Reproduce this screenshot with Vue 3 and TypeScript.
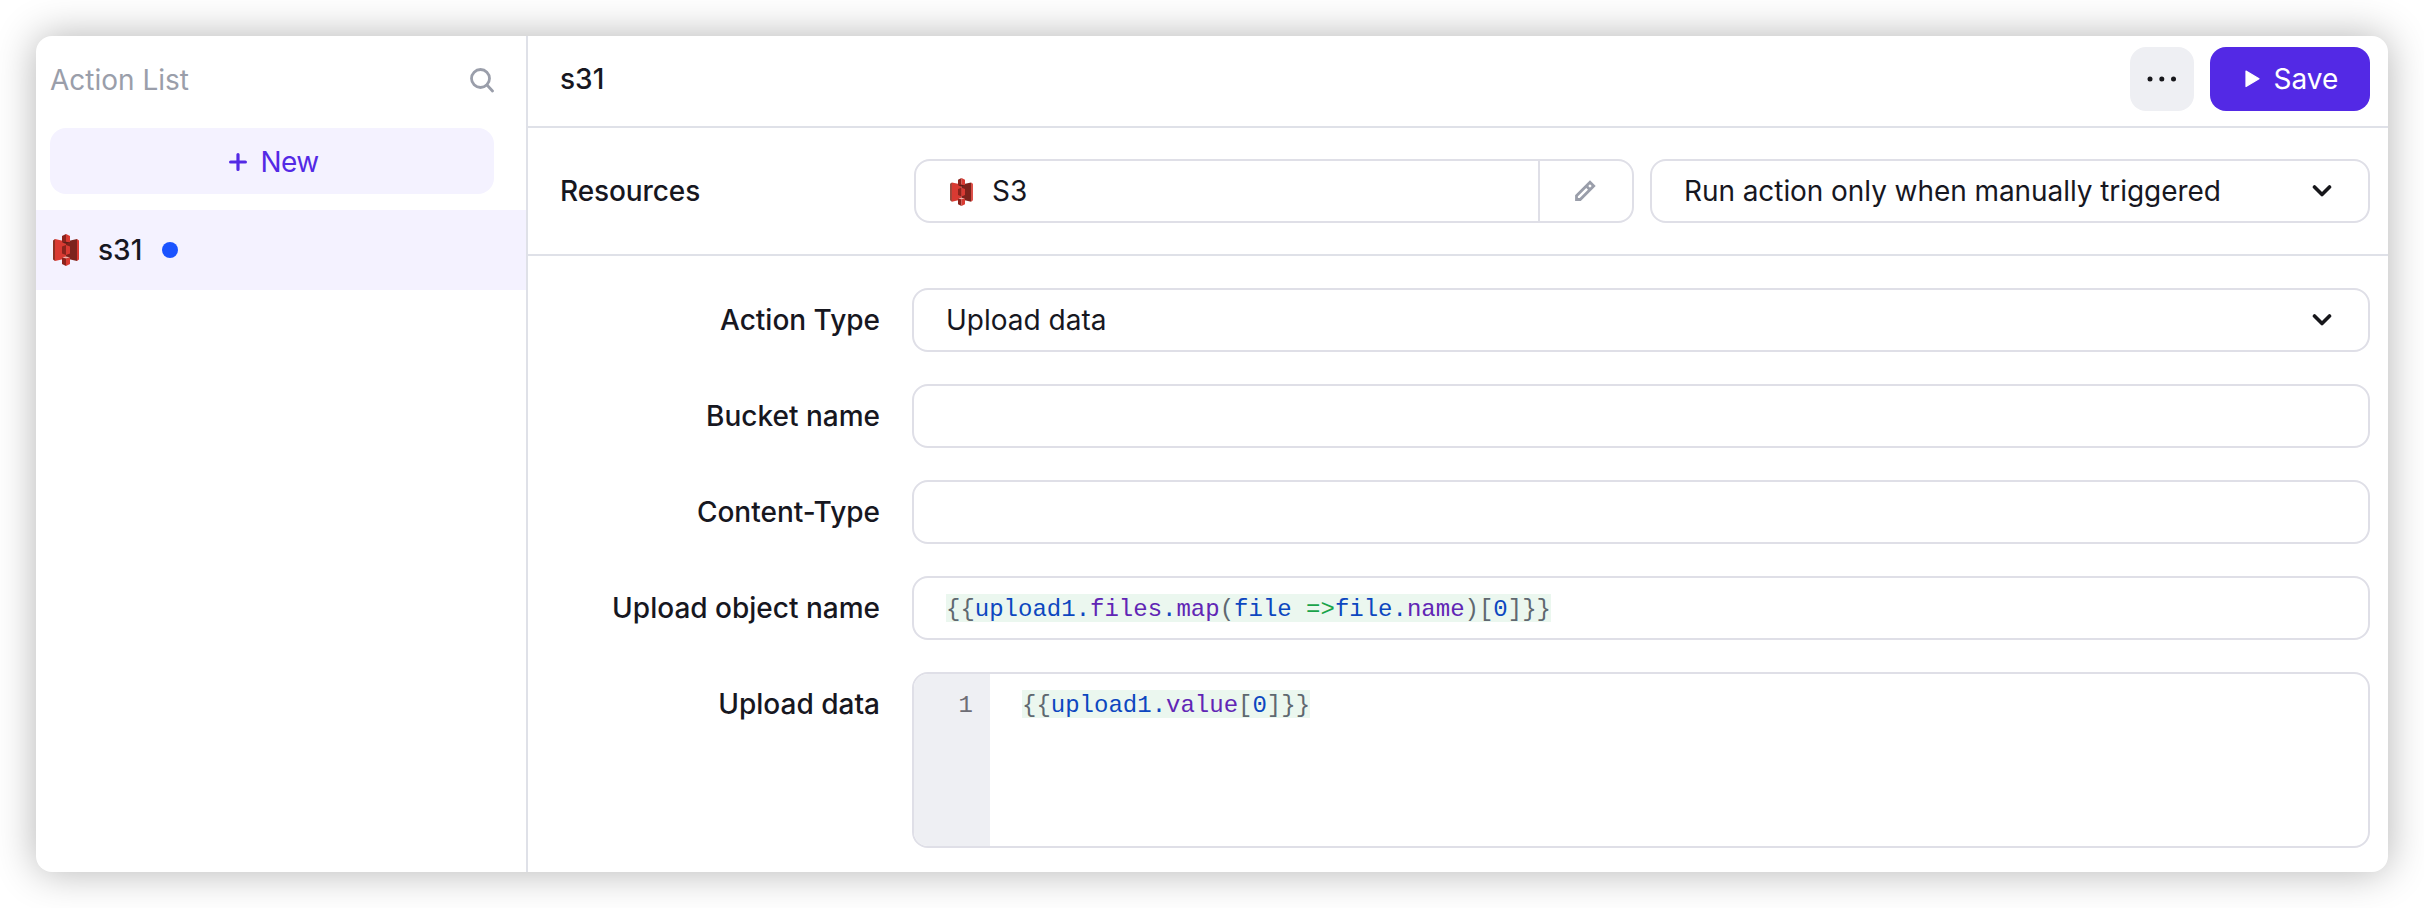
<script setup lang="ts">
interface Token { text: string; kind: string }

const objectName: Token[] = [
  { text: '{{', kind: 'punct' },
  { text: 'upload1.', kind: 'variable' },
  { text: 'files', kind: 'property' },
  { text: '.', kind: 'variable' },
  { text: 'map', kind: 'property' },
  { text: '(', kind: 'punct' },
  { text: 'file ', kind: 'variable' },
  { text: '=>', kind: 'operator' },
  { text: 'file.', kind: 'variable' },
  { text: 'name', kind: 'property' },
  { text: ')[', kind: 'punct' },
  { text: '0', kind: 'variable' },
  { text: ']}}', kind: 'punct' },
]

const uploadData: Token[] = [
  { text: '{{', kind: 'punct' },
  { text: 'upload1.', kind: 'variable' },
  { text: 'value', kind: 'property' },
  { text: '[', kind: 'punct' },
  { text: '0', kind: 'variable' },
  { text: ']}}', kind: 'punct' },
]
</script>

<template>
  <svg class="defs" aria-hidden="true">
    <symbol id="s3" viewBox="0 0 28 32">
      <path d="M1 6.500 3 5v22l-2-1.500z" fill="#8c3123" />
      <path d="M3 5l11 2.500v17L3 27z" fill="#d93a32" />
      <path d="M25 5L14 7.500v17L25 27z" fill="#7d231c" />
      <path d="M25 5l2 1.500v19L25 27z" fill="#d93a32" />
      <path d="M14 0l-4 2v6l4 1z" fill="#8c231c" />
      <path d="M14 0l4 2v6l-4 1z" fill="#d93a32" />
      <path d="M10 8.500l4-.8 4 .8-4 1.200z" fill="#5e1f18" />
      <path d="M14 11l-4 1.500v7l4 1.500z" fill="#8c231c" />
      <path d="M14 11l4 1.500v7L14 21z" fill="#d93a32" />
      <path d="M10 23.500l4-1 4 1-4 1z" fill="#f2b0a9" />
      <path d="M10 23.500l4 1V32l-4-2z" fill="#8c231c" />
      <path d="M18 23.500l-4 1V32l4-2z" fill="#d93a32" />
    </symbol>
    <symbol id="chevron" viewBox="0 0 20 14">
      <path d="M2.500 3L10 10.500 17.500 3" fill="none" stroke="#17171b" stroke-width="3.600" stroke-linecap="round" stroke-linejoin="round" />
    </symbol>
  </svg>

  <main class="window">
    <aside class="sidebar">
      <div class="search">
        <span>Action List</span>
        <svg width="24" height="26" viewBox="0 0 24 26" fill="none" stroke="#9a9eaa" stroke-width="2.800" stroke-linecap="round">
          <circle cx="10.500" cy="11.500" r="9" />
          <path d="M17 18l5.500 6" />
        </svg>
      </div>
      <button class="new">
        <svg width="18" height="18" viewBox="0 0 18 18" fill="none" stroke="#5329e5" stroke-width="3.200" stroke-linecap="round">
          <path d="M9 1.600v14.800M1.600 9h14.800" />
        </svg>
        <span>New</span>
      </button>
      <div class="item">
        <svg class="s3"><use href="#s3" /></svg>
        <span class="item-name">s31</span>
        <i class="dot"></i>
      </div>
    </aside>

    <section class="panel">
      <header class="header">
        <span class="title">s31</span>
        <button class="more">
          <svg width="30" height="6" viewBox="0 0 30 6" fill="#17171b">
            <circle cx="3" cy="3" r="2.500" /><circle cx="14.800" cy="3" r="2.500" /><circle cx="26.500" cy="3" r="2.500" />
          </svg>
        </button>
        <button class="save">
          <svg width="15" height="18" viewBox="0 0 15 18"><path d="M1 1L14 8.700 1 16.500z" fill="#fff" stroke="#fff" stroke-width="1.200" stroke-linejoin="round" /></svg>
          <span>Save</span>
        </button>
      </header>

      <div class="resources">
        <span class="title res-label">Resources</span>
        <div class="box resource">
          <div class="res-value">
            <svg class="s3 small"><use href="#s3" /></svg>
            <span>S3</span>
          </div>
          <div class="edit">
            <svg width="24" height="24" viewBox="0 0 24 24" fill="none" stroke="#9a9eaa" stroke-width="2.800" stroke-linejoin="miter">
              <path d="M3.500 16.800L17 3.300l3.700 3.700L7.200 20.500H3.500z" />
              <path d="M13.300 7l3.700 3.700" />
            </svg>
          </div>
        </div>
        <div class="box select trigger">
          <span>Run action only when manually triggered</span>
          <svg class="chevron"><use href="#chevron" /></svg>
        </div>
      </div>

      <div class="form">
        <label>Action Type</label>
        <div class="box select">
          <span>Upload data</span>
          <svg class="chevron"><use href="#chevron" /></svg>
        </div>
        <label>Bucket name</label>
        <div class="box"></div>
        <label>Content-Type</label>
        <div class="box"></div>
        <label>Upload object name</label>
        <div class="box code-line">
          <code><span v-for="(t, i) in objectName" :key="i" :class="t.kind">{{ t.text }}</span></code>
        </div>
        <label>Upload data</label>
        <div class="box editor">
          <div class="gutter">1</div>
          <code><span v-for="(t, i) in uploadData" :key="i" :class="t.kind">{{ t.text }}</span></code>
        </div>
      </div>
    </section>
  </main>
</template>

<style>
body { margin: 0; background: #fff; overflow: hidden; }
</style>

<style scoped>
* { box-sizing: border-box; }
.defs { position: absolute; width: 0; height: 0; }
.window {
  width: 2352px; height: 836px; margin: 36px; display: flex; overflow: hidden;
  background: #fff; border-radius: 16px; box-shadow: 0 0 40px rgba(0, 0, 0, 0.3);
  font: 400 28px/44px Inter, sans-serif; color: #17171f;
}
button { border: 0; padding: 0; font: inherit; display: flex; align-items: center; justify-content: center; }
svg { display: block; flex: none; }
.sidebar { width: 492px; border-right: 2px solid #dfe1e8; flex: none; }
.search { height: 92px; padding: 0 32px 4px 14px; display: flex; align-items: center; justify-content: space-between; color: #9a9eaa; }
.new { width: 444px; height: 66px; margin: 0 0 16px 14px; padding: 2px 0 0 4px; gap: 13px; border-radius: 16px; background: #f4f2ff; color: #5329e5; letter-spacing: -0.6px; }
.item { height: 80px; padding-left: 16px; display: flex; align-items: center; background: #f4f2ff; }
.s3 { width: 28px; height: 32px; }
.small { width: 25px; height: 28px; margin-top: 2px; }
.item-name { margin: 0 20px 0 18px; font-weight: 500; }
.dot { width: 16px; height: 16px; border-radius: 50%; background: #1a53ff; }
.panel { flex: 1; }
.header { height: 92px; padding: 0 18px 4px 32px; display: flex; align-items: center; border-bottom: 2px solid #dfe1e8; }
.title { font-weight: 500; }
.more { width: 64px; height: 64px; margin-left: auto; border-radius: 16px; background: #eeeff3; }
.save { width: 160px; height: 64px; margin-left: 16px; padding-left: 3px; gap: 14px; border-radius: 16px; background: #5329e5; color: #fff; }
.resources { height: 128px; padding: 0 18px 0 32px; display: flex; align-items: center; border-bottom: 2px solid #dfe1e8; }
.res-label { width: 354px; letter-spacing: -0.1px; }
.box { height: 64px; border: 2px solid #dfdfe7; border-radius: 16px; }
.resource { width: 720px; display: flex; }
.res-value { flex: 1; display: flex; align-items: center; gap: 18px; padding-left: 33px; }
.edit { width: 94px; padding-right: 2px; display: flex; align-items: center; justify-content: center; border-left: 2px solid #dfdfe7; }
.select { display: flex; align-items: center; justify-content: space-between; padding: 0 36px 0 32px; }
.trigger { width: 720px; margin-left: 16px; letter-spacing: -0.07px; }
.chevron { width: 20px; height: 14px; }
.form { display: grid; grid-template-columns: 352px 1458px; column-gap: 32px; row-gap: 32px; padding-top: 32px; }
label { text-align: right; font-weight: 500; line-height: 65px; height: 64px; }
code { font: 24px/32px "Liberation Mono", monospace; height: 28px; background: #ebf7ef; white-space: pre; }
.code-line { display: flex; align-items: center; padding-left: 32px; }
.editor { height: 176px; display: flex; overflow: hidden; }
.gutter { width: 76px; background: #eeeff3; padding: 16px 17px 0 0; text-align: right; font: 24px/32px "Liberation Mono", monospace; color: #6d6d75; }
.editor code { margin: 16px 0 0 32px; }
.punct { color: #5f6870; }
.variable { color: #0d47c0; }
.property { color: #6126b5; }
.operator { color: #18a34a; }
</style>
